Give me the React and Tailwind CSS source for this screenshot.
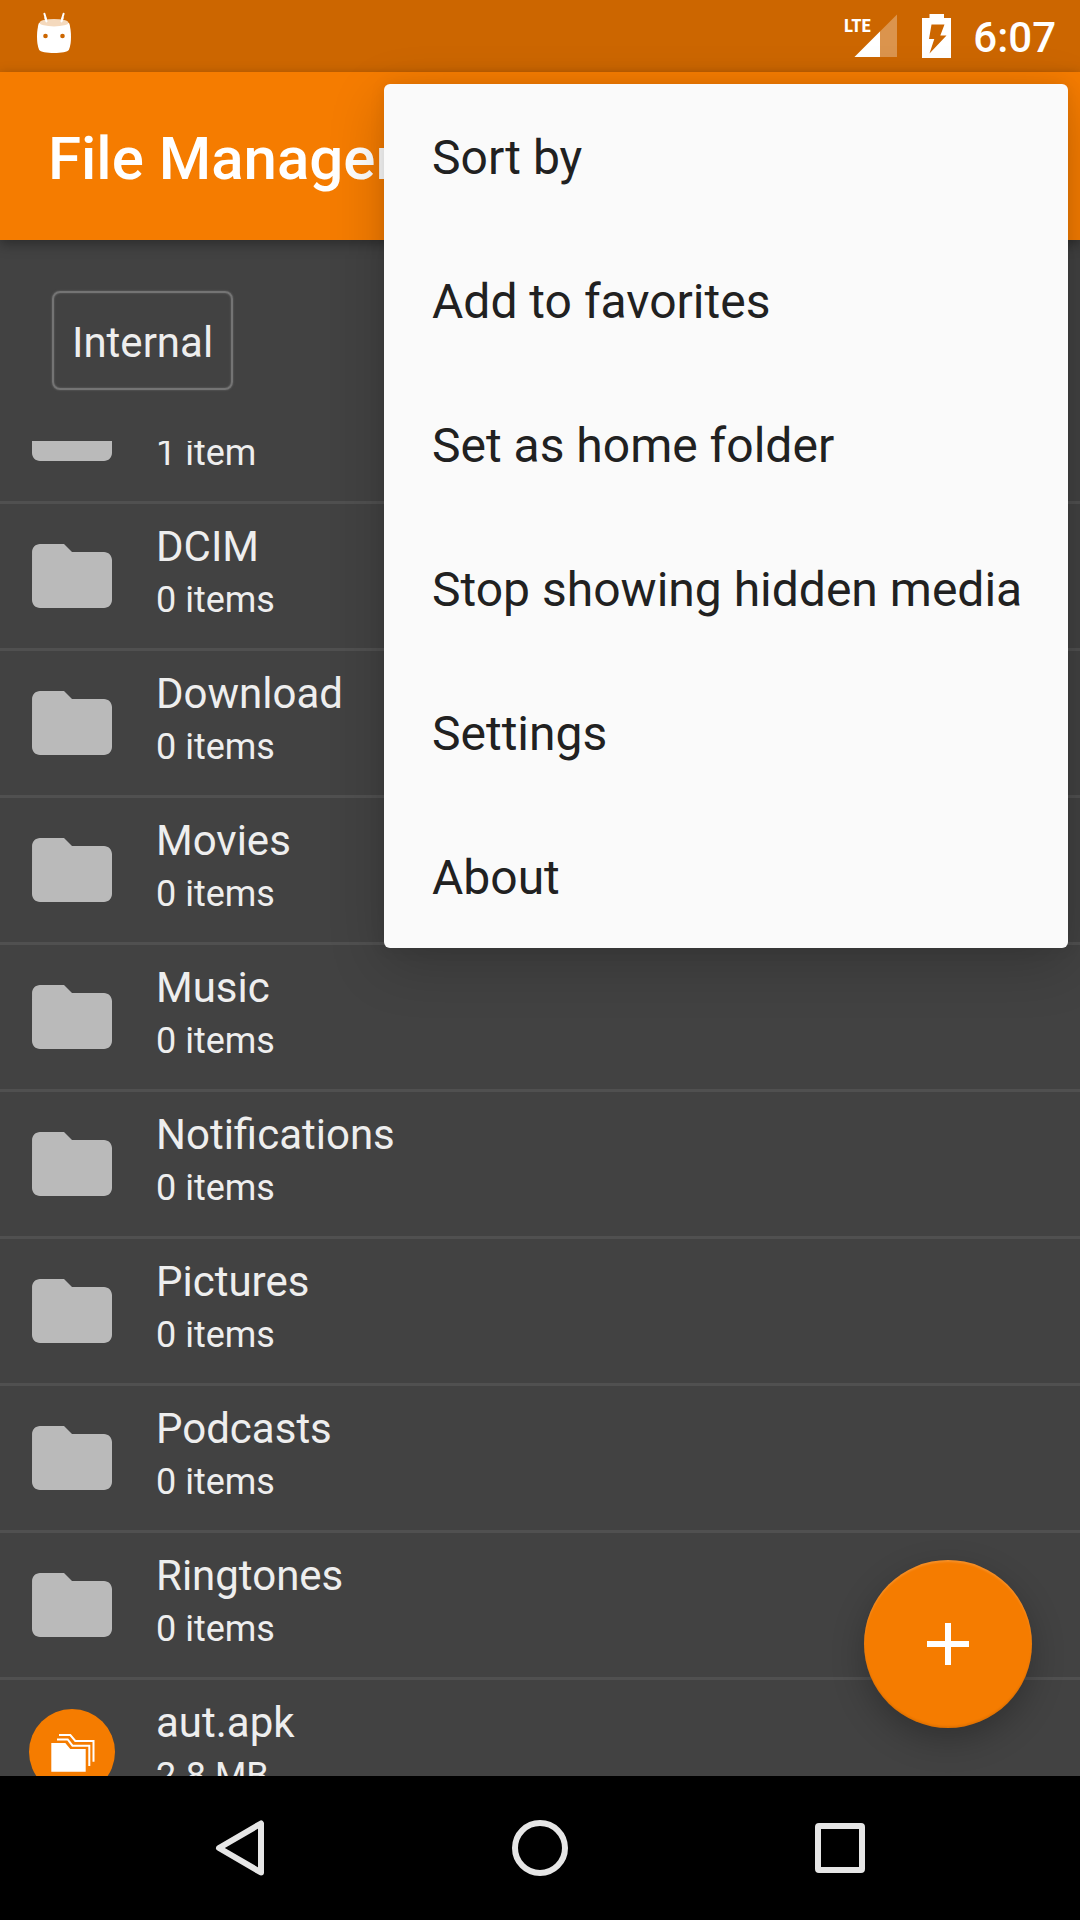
import { useLayoutEffect, useRef } from "react";

const FILES = [
  { name: "Android", detail: "1 item" },
  { name: "DCIM", detail: "0 items" },
  { name: "Download", detail: "0 items" },
  { name: "Movies", detail: "0 items" },
  { name: "Music", detail: "0 items" },
  { name: "Notifications", detail: "0 items" },
  { name: "Pictures", detail: "0 items" },
  { name: "Podcasts", detail: "0 items" },
  { name: "Ringtones", detail: "0 items" },
  { name: "aut.apk", detail: "2.8 MB", apk: true },
];

const MENU = [
  "Sort by",
  "Add to favorites",
  "Set as home folder",
  "Stop showing hidden media",
  "Settings",
  "About",
];

function DebugIcon() {
  return (
    <svg className="h-12 w-9" viewBox="36 10 36 48" aria-hidden="true">
      <path d="M44.4 13.8L46.6 21M63.6 13.8L61.4 21" stroke="#fff" strokeWidth="2" strokeLinecap="round" />
      <path
        d="M39 23c-1.500 4-2 9-2 14c0 5 .7 9.500 2 12.500c1.200 2.700 8 3.500 15 3.500s13.800-.8 15-3.500c1.300-3 2-7.500 2-12.500c0-5-.5-10-2-14z"
        fill="#fff"
      />
      <path d="M39 23c1 2.400 7 3.600 15 3.600s14-1.200 15-3.600l1 5H38z" fill="#fff" />
      <ellipse cx="54" cy="22.700" rx="14.500" ry="3.700" fill="#f4d9bd" />
      <path d="M45.300 18l1.200 3.400M62.700 18l-1.200 3.400" stroke="#fff" strokeWidth="2" strokeLinecap="round" />
      <circle cx="45.500" cy="36" r="2.300" fill="#cc6600" />
      <circle cx="62.500" cy="36" r="2.300" fill="#cc6600" />
    </svg>
  );
}

function SignalIcon() {
  return (
    <svg className="h-12 w-14" viewBox="844 12 56 48" aria-hidden="true">
      <path d="M855.500 57L898 14.500V57z" fill="#fff" fillOpacity=".3" />
      <path d="M855.500 57L881 31.500V57z" fill="#fff" />
      <text
        x="845"
        y="32"
        fill="#fff"
        fontSize="19"
        fontWeight="700"
        fontFamily="'Roboto Condensed', 'Liberation Sans Narrow', Roboto, sans-serif"
      >
        LTE
      </text>
    </svg>
  );
}

function BatteryIcon() {
  return (
    <svg className="h-12 w-8" viewBox="922 12 32 48" aria-hidden="true">
      <path
        fillRule="evenodd"
        d="M930.500 14h14.500v4h7v40h-29V18h7.500zM932.500 24.500L930 39h5.300L930.500 53.500L947.500 35.500H941.300L945.500 24.500z"
        fill="#fff"
      />
    </svg>
  );
}

function FolderIcon() {
  return (
    <svg className="size-24 shrink-0" viewBox="0 0 24 24" fill="#bababa" aria-hidden="true">
      <path d="M10 4H4c-1.100 0-1.990.9-1.990 2L2 18c0 1.100.9 2 2 2h16c1.100 0 2-.9 2-2V8c0-1.100-.9-2-2-2h-8l-2-2z" />
    </svg>
  );
}

function ApkIcon() {
  return (
    <svg className="size-24 shrink-0" viewBox="0 0 96 96" fill="none" aria-hidden="true">
      <circle cx="48" cy="48" r="43" fill="#f57c00" />
      <path d="M27.300 39H41.300L46.300 45H61.700V67.700H27.300z" fill="#fff" />
      <path d="M33 35.500H43.700L48.500 41.700H65.300V62M35 31H46.300L51.300 37H69.500V57.700" stroke="#fff" strokeWidth="2" />
    </svg>
  );
}

function StatusBar() {
  return (
    <div className="flex h-[72px] shrink-0 items-center justify-between bg-[#cc6600] pr-6 pl-9 text-white">
      <div className="-mt-1">
        <DebugIcon />
      </div>
      <div className="flex items-center">
        <SignalIcon />
        <div className="ml-[22px]">
          <BatteryIcon />
        </div>
        <span className="ml-5 pt-1 text-[42px] leading-[48px] font-medium">6:07</span>
      </div>
    </div>
  );
}

function FileList() {
  const ref = useRef(null);
  useLayoutEffect(() => {
    ref.current.scrollTop = 84;
  }, []);
  return (
    <ul ref={ref} className="min-h-0 flex-1 overflow-y-auto [scrollbar-width:none]">
      {FILES.map((file) => (
        <li
          key={file.name}
          className="flex h-[147px] gap-9 border-b-[3px] border-[#505050] px-6 text-[#eeeeee]"
        >
          <div className="flex items-center">{file.apk ? <ApkIcon /> : <FolderIcon />}</div>
          <div className="pt-[17px]">
            <div className="text-[42px] leading-[52px]">{file.name}</div>
            <div className="text-[36px] leading-[54px]">{file.detail}</div>
          </div>
        </li>
      ))}
    </ul>
  );
}

function OverflowMenu() {
  return (
    <div
      role="menu"
      className="absolute top-[84px] right-3 z-30 flex w-[684px] flex-col rounded-md bg-[#fafafa] shadow-[0_16px_56px_rgba(0,0,0,0.2),0_0_16px_rgba(0,0,0,0.08)]"
    >
      {MENU.map((label) => (
        <button
          key={label}
          type="button"
          role="menuitem"
          className="h-36 px-12 pt-1 text-left text-[48px] leading-[56px] whitespace-nowrap text-[#212121]"
        >
          {label}
        </button>
      ))}
    </div>
  );
}

function NavigationBar() {
  return (
    <nav className="grid h-36 shrink-0 grid-cols-3 bg-black px-[90px]">
      <button type="button" aria-label="Back" className="flex items-center justify-center">
        <svg className="size-16" viewBox="0 0 64 64" fill="none" stroke="#e6e6e6" strokeWidth="6" strokeLinejoin="round">
          <path d="M53 7.500V56.500L11 32z" />
        </svg>
      </button>
      <button type="button" aria-label="Home" className="flex items-center justify-center">
        <svg className="size-16" viewBox="0 0 64 64" fill="none" stroke="#e6e6e6" strokeWidth="6">
          <circle cx="32" cy="32" r="25" />
        </svg>
      </button>
      <button type="button" aria-label="Recent apps" className="flex items-center justify-center">
        <svg className="size-16" viewBox="0 0 64 64" fill="none" stroke="#e6e6e6" strokeWidth="6" strokeLinejoin="round">
          <rect x="10" y="10" width="44" height="44" rx="1" />
        </svg>
      </button>
    </nav>
  );
}

export default function App() {
  return (
    <div className="relative flex h-screen flex-col overflow-hidden bg-[#424242] font-[Roboto,sans-serif]">
      <StatusBar />
      <header className="z-10 flex h-[168px] shrink-0 items-center bg-[#f57c00] px-12 pt-1.5 shadow-[0_4px_12px_rgba(0,0,0,0.35)]">
        <h1 className="text-[60px] leading-[72px] font-medium text-white">File Manager</h1>
      </header>
      <main className="relative flex min-h-0 flex-1 flex-col">
        <div className="shrink-0 px-[52px] py-[51px]">
          <button
            type="button"
            className="flex h-[99px] items-center rounded-lg border-2 border-[#747474] px-[18px] pt-1 text-[42px] leading-[52px] text-[#eeeeee] shadow-[0_0_2px_#707070,inset_0_0_2px_#707070]"
          >
            Internal
          </button>
        </div>
        <FileList />
        <button
          type="button"
          aria-label="Create new"
          className="absolute right-12 bottom-12 flex size-[168px] items-center justify-center rounded-full bg-[#f57c00] shadow-[0_12px_32px_rgba(0,0,0,0.25),inset_0_2px_2px_rgba(255,255,255,0.15),inset_0_-2px_2px_rgba(0,0,0,0.08)]"
        >
          <svg className="size-[42px]" viewBox="0 0 42 42" fill="#fff">
            <path d="M18 0h6v18h18v6H24v18h-6V24H0v-6h18z" />
          </svg>
        </button>
      </main>
      <NavigationBar />
      <OverflowMenu />
    </div>
  );
}
